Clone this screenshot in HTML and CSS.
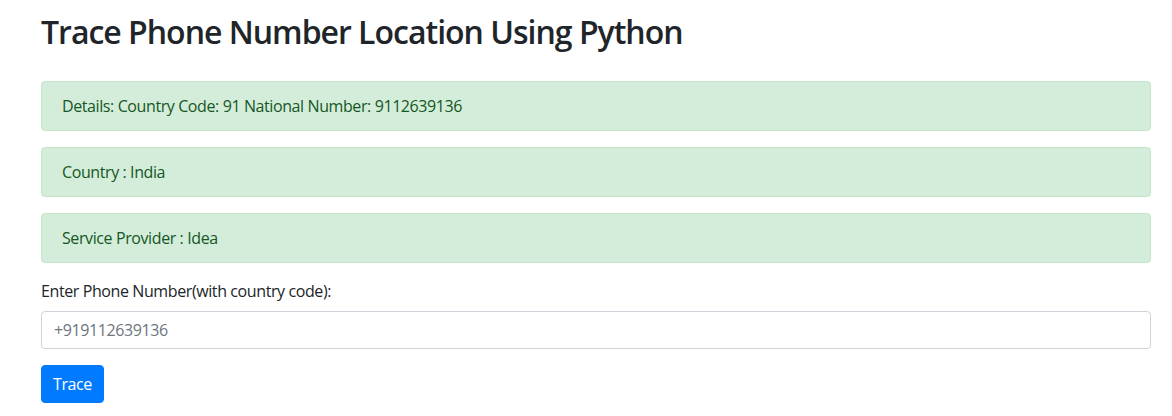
FILE: index.html
```html
<!DOCTYPE html>
<html lang="en">
<head>
<meta charset="utf-8">
<title>Trace Phone Number Location Using Python</title>
<link rel="stylesheet" href="styles.css">
</head>
<body>
<div class="container">
  <h1 class="title">Trace Phone Number Location Using Python</h1>
  <div class="alert">Details: Country Code: 91 National Number: 9112639136</div>
  <div class="alert">Country : India</div>
  <div class="alert">Service Provider : Idea</div>
  <form class="form">
    <div class="form-group">
      <label class="label" for="phone">Enter Phone Number(with country code):</label>
      <input class="input" id="phone" type="text" placeholder="+919112639136">
    </div>
    <button class="btn" type="button">Trace</button>
  </form>
</div>
</body>
</html>
```

FILE: styles.css
```css
* { box-sizing: border-box; }
html, body { margin: 0; padding: 0; background: #fff; }
body {
  font-family: "Open Sans", "Noto Sans", sans-serif;
  font-size: 16px;
  line-height: 1.5;
  letter-spacing: -0.4px;
  color: #212529;
}
.container {
  padding: 13px 21px 0 41px;
}
.title {
  margin: 0 0 30px;
  font-size: 32px;
  font-weight: 600;
  line-height: 1.2;
  letter-spacing: -1px;
  color: #212529;
}
.alert {
  padding: 12px 20px;
  margin-bottom: 16px;
  border: 1px solid #c3e6cb;
  border-radius: 4px;
  background: #d4edda;
  color: #155724;
}
.form { margin: 0; }
.form-group { margin-bottom: 16px; }
.label {
  display: block;
  margin-bottom: 8px;
}
.input {
  display: block;
  width: 100%;
  height: 38px;
  padding: 6px 12px;
  font: inherit;
  letter-spacing: -0.4px;
  color: #495057;
  background: #fff;
  border: 1px solid #ced4da;
  border-radius: 4px;
  outline: none;
}
.input::placeholder { color: #6c757d; opacity: 1; }
.btn {
  display: inline-block;
  height: 38px;
  padding: 6px 11px;
  font: inherit;
  letter-spacing: -0.4px;
  color: #fff;
  background: #007bff;
  border: 1px solid #007bff;
  border-radius: 4px;
  cursor: pointer;
}
```
